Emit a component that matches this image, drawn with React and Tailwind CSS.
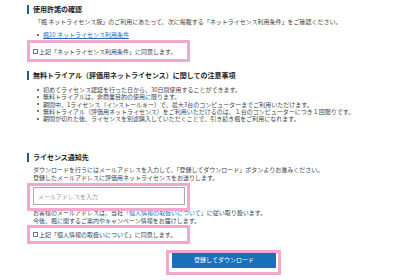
import React from "react";

function Header({ children }) {
  return (
    <div className="flex items-center h-[9px] border-l-2 border-[#1d5b9b] pl-[4px] text-[7px] font-bold text-[#222] leading-[9px]">
      {children}
    </div>
  );
}

function Dot() {
  return (
    <span className="w-[7px] shrink-0 flex items-center pl-[1px]">
      <span className="block w-[2px] h-[2px] rounded-full bg-[#444]"></span>
    </span>
  );
}

function Bullet({ children }) {
  return (
    <li className="flex items-center h-[7.25px] leading-[7.25px]">
      <Dot />
      <span>{children}</span>
    </li>
  );
}

function Check({ children }) {
  return (
    <div className="flex items-center gap-[1px]">
      <span className="inline-block w-[5px] h-[5px] border border-[#777] bg-white"></span>
      <span>{children}</span>
    </div>
  );
}

export default function App() {
  return (
    <div className="relative w-[400px] h-[280px] overflow-hidden bg-white text-[6px] text-[#444] font-['Noto_Sans_CJK_JP',sans-serif]">
      <div className="pl-[27px] pt-[5px]">
        {/* Section 1 */}
        <Header>使用許諾の確認</Header>
        <p className="mt-[4px] pl-[8px] leading-[8px]">
          「楓 ネットライセンス版」のご利用にあたって、次に掲載する「ネットライセンス利用条件」をご確認ください。
        </p>
        <ul className="mt-[5px] pl-[9px] leading-[8px]">
          <li className="flex items-center h-[8px]">
            <Dot />
            <span className="text-[#2a6cc0] underline">楓10 ネットライセンス利用条件</span>
          </li>
        </ul>
        <div className="mt-[8px] pl-[6px] h-[8px]">
          <Check>上記「ネットライセンス利用条件」に同意します。</Check>
        </div>

        {/* Section 2 */}
        <div className="mt-[16px]">
          <Header>無料トライアル（評価用ネットライセンス）に関しての注意事項</Header>
        </div>
        <ul className="mt-[6px] pl-[9px]">
          <Bullet>初めてライセンス認証を行った日から、30日間使用することができます。</Bullet>
          <Bullet>無料トライアルは、非商業目的の使用に限ります。</Bullet>
          <Bullet>期間中、1ライセンス（インストールキー）で、最大3台のコンピューターまでご利用いただけます。</Bullet>
          <Bullet>無料トライアル（評価用ネットライセンス）をご利用いただけるのは、１台のコンピューターにつき１回限りです。</Bullet>
          <Bullet>期間が切れた後、ライセンスを別途購入していただくことで、引き続き楓をご利用になれます。</Bullet>
        </ul>

        {/* Section 3 */}
        <div className="mt-[31px]">
          <Header>ライセンス通知先</Header>
        </div>
        <div className="mt-[4px] pl-[6px] leading-[8px]">
          <p>ダウンロードを行うにはメールアドレスを入力して、「登録してダウンロード」ボタンよりお進みください。</p>
          <p>登録したメールアドレスに評価用ネットライセンスをお送りします。</p>
        </div>
        <div className="mt-[5px] pl-[6px] h-[18px] flex">
          <div className="w-[152px] h-[18px] border border-[#aaa] bg-white flex items-center pl-[4px] text-[#999]">
            メールアドレスを入力
          </div>
        </div>
        <div className="mt-[4px] pl-[6px] leading-[8px]">
          <p>
            お客様のメールアドレスは、当社<span className="text-[#2a6cc0]">「個人情報の取扱いについて」</span>に従い取り扱います。
          </p>
          <p>今後、楓に関するご案内やキャンペーン情報をお届けします。</p>
        </div>
        <div className="mt-[5px] pl-[6px] h-[8px]">
          <Check>上記「個人情報の取扱いについて」に同意します。</Check>
        </div>

        <div className="mt-[12px] pl-[145px]">
          <div className="w-[104px] h-[18px] bg-[#1a6fba] rounded-[1px] text-white text-[6px] flex items-center justify-center">
            登録してダウンロード
          </div>
        </div>
      </div>

      {/* Annotation frames */}
      <div className="absolute left-[27px] top-[40px] w-[163px] h-[22px] border-[3px] border-[#f3a9cb]"></div>
      <div className="absolute left-[27px] top-[183px] w-[163px] h-[28px] border-[3px] border-[#f3a9cb]"></div>
      <div className="absolute left-[27px] top-[225px] w-[163px] h-[19px] border-[3px] border-[#f3a9cb]"></div>
      <div className="absolute left-[166px] top-[250px] w-[115px] h-[25px] border-[3px] border-[#f3a9cb]"></div>
    </div>
  );
}
